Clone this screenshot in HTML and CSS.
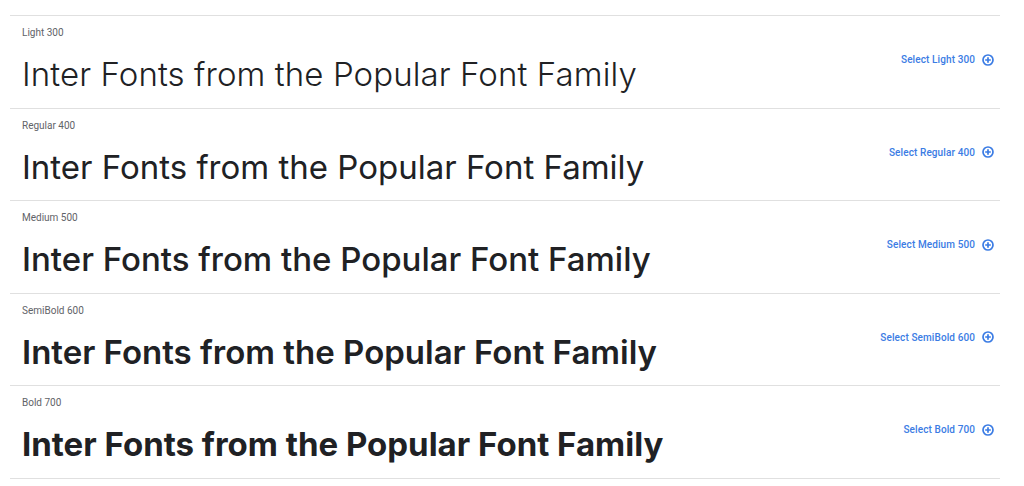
FILE: index.html
```html
<!DOCTYPE html>
<html lang="en">
<head>
  <meta charset="UTF-8">
  <meta name="viewport" content="width=device-width, initial-scale=1.0">
  <title>Inter - Styles</title>
  <link rel="stylesheet" href="styles.css">
</head>
<body>
  <div class="styles">
    <div class="style-row">
      <div class="style-info">
        <div class="style-name">Light 300</div>
        <div class="sample w300">Inter Fonts from the Popular Font Family</div>
      </div>
      <a class="select-link" href="#">Select Light 300
        <svg viewBox="0 0 12 12"><circle cx="6" cy="6" r="5"/><path d="M6 3.2v5.6M3.2 6h5.6"/></svg>
      </a>
    </div>
    <div class="style-row">
      <div class="style-info">
        <div class="style-name">Regular 400</div>
        <div class="sample w400">Inter Fonts from the Popular Font Family</div>
      </div>
      <a class="select-link" href="#">Select Regular 400
        <svg viewBox="0 0 12 12"><circle cx="6" cy="6" r="5"/><path d="M6 3.2v5.6M3.2 6h5.6"/></svg>
      </a>
    </div>
    <div class="style-row">
      <div class="style-info">
        <div class="style-name">Medium 500</div>
        <div class="sample w500">Inter Fonts from the Popular Font Family</div>
      </div>
      <a class="select-link" href="#">Select Medium 500
        <svg viewBox="0 0 12 12"><circle cx="6" cy="6" r="5"/><path d="M6 3.2v5.6M3.2 6h5.6"/></svg>
      </a>
    </div>
    <div class="style-row">
      <div class="style-info">
        <div class="style-name">SemiBold 600</div>
        <div class="sample w600">Inter Fonts from the Popular Font Family</div>
      </div>
      <a class="select-link" href="#">Select SemiBold 600
        <svg viewBox="0 0 12 12"><circle cx="6" cy="6" r="5"/><path d="M6 3.2v5.6M3.2 6h5.6"/></svg>
      </a>
    </div>
    <div class="style-row">
      <div class="style-info">
        <div class="style-name">Bold 700</div>
        <div class="sample w700">Inter Fonts from the Popular Font Family</div>
      </div>
      <a class="select-link" href="#">Select Bold 700
        <svg viewBox="0 0 12 12"><circle cx="6" cy="6" r="5"/><path d="M6 3.2v5.6M3.2 6h5.6"/></svg>
      </a>
    </div>
  </div>
</body>
</html>
```

FILE: styles.css
```css
body {
  margin: 0;
  padding: 15px 24px 0 10px;
  background-color: #fff;
  color: #202124;
  font-family: Roboto, 'Noto Sans', sans-serif;
}

.styles {
  border-top: 1px solid #e0e0e0;
}

.style-row {
  display: flex;
  align-items: center;
  justify-content: space-between;
  padding: 9px 0 9.6px 12px;
  border-bottom: 1px solid #e0e0e0;
}

.style-name {
  font-size: 10px;
  line-height: 16px;
  color: #5f6368;
  margin-bottom: 9px;
}

.sample {
  font-family: Inter, sans-serif;
  font-size: 33px;
  line-height: 48px;
  color: #202124;
  white-space: nowrap;
}

.w300 { font-weight: 300; letter-spacing: 0.1px; }
.w400 { font-weight: 400; }
.w500 { font-weight: 500; }
.w600 { font-weight: 600; }
.w700 { font-weight: 700; }

.select-link {
  display: flex;
  align-items: center;
  gap: 7px;
  margin-right: 6px;
  margin-bottom: 4px;
  font-size: 10px;
  font-weight: 500;
  letter-spacing: 0.1px;
  color: #3b7ce4;
  text-decoration: none;
}

.select-link svg {
  width: 12px;
  height: 12px;
  fill: none;
  stroke: #3b7ce4;
  stroke-width: 1.7;
}
```
